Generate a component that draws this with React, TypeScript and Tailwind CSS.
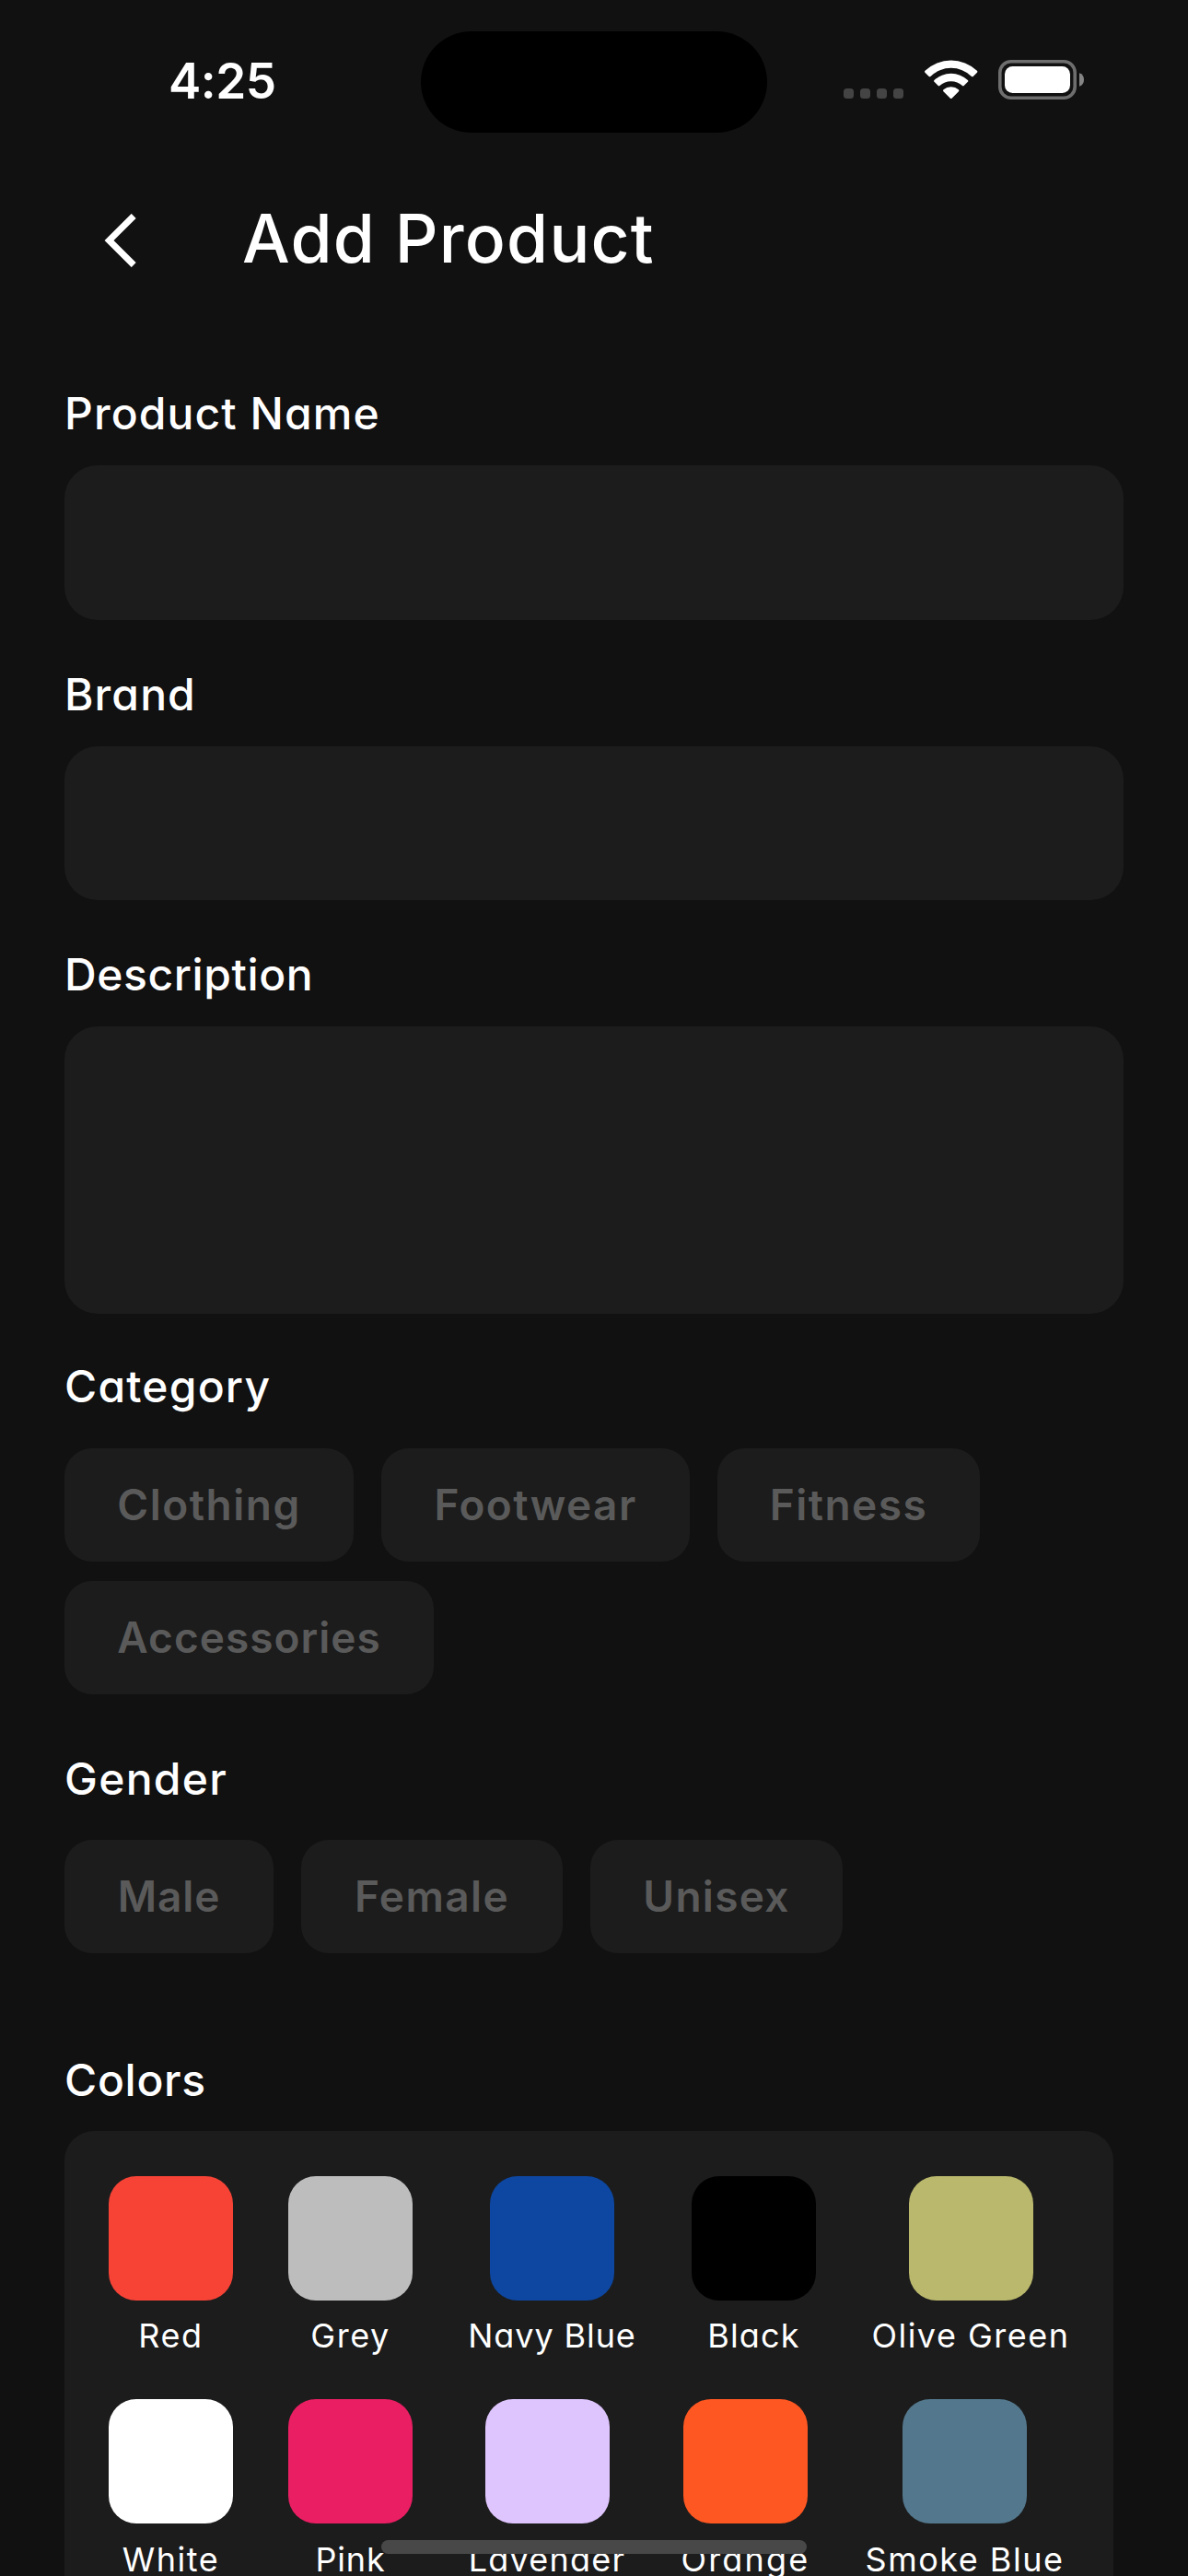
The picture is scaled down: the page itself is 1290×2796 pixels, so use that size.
import React from "react";

type Chip = { name: string; box: string };
type Swatch = { name: string; fill: string; box: string; tracking: string };

const categories: Chip[] = [
  { name: "Clothing", box: "w-[314px] tracking-[1.5px]" },
  { name: "Footwear", box: "w-[335px] tracking-[1.4px]" },
  { name: "Fitness", box: "w-[285px] tracking-[1.5px]" },
  { name: "Accessories", box: "w-[401px] tracking-[1px]" },
];

const genders: Chip[] = [
  { name: "Male", box: "w-[227px] tracking-[0.8px]" },
  { name: "Female", box: "w-[284px] tracking-[1.4px]" },
  { name: "Unisex", box: "w-[274px] tracking-[1.3px]" },
];

const swatchRows: Swatch[][] = [
  [
    { name: "Red", fill: "bg-[#f64336]", box: "w-[135px]", tracking: "tracking-[1.6px]" },
    { name: "Grey", fill: "bg-[#bdbdbd]", box: "w-[135px]", tracking: "tracking-[1.5px]" },
    { name: "Navy Blue", fill: "bg-[#0d47a1]", box: "w-[183px]", tracking: "tracking-[0.9px]" },
    { name: "Black", fill: "bg-black", box: "w-[135px]", tracking: "tracking-[1.2px]" },
    { name: "Olive Green", fill: "bg-[#bab86c]", box: "w-[216px]", tracking: "tracking-[1.5px]" },
  ],
  [
    { name: "White", fill: "bg-white", box: "w-[135px]", tracking: "tracking-[1.5px]" },
    { name: "Pink", fill: "bg-[#e91e63]", box: "w-[135px]", tracking: "tracking-[0.8px]" },
    { name: "Lavender", fill: "bg-[#dfc5fe]", box: "w-[172px]", tracking: "tracking-[1.2px]" },
    { name: "Orange", fill: "bg-[#ff5722]", box: "w-[139px]", tracking: "tracking-[2.2px]" },
    { name: "Smoke Blue", fill: "bg-[#53788d]", box: "w-[217px]", tracking: "tracking-[1.5px]" },
  ],
];

function StatusBar() {
  return (
    <header className="relative flex h-[178px] shrink-0 items-start">
      <span className="ml-[183px] mt-[58px] text-[53px] font-semibold leading-[60px] tracking-[-0.5px]">4:25</span>
      <div className="absolute left-[457px] top-[34px] h-[110px] w-[376px] rounded-full bg-black" />
      <div className="ml-auto mr-[113px] mt-[65px] flex h-[43px] items-start">
        <div className="mr-[23px] mt-[31px] flex gap-[7px]">
          {[0, 1, 2, 3].map((i) => (
            <i key={i} className="block size-[11px] rounded-[3.5px] bg-[#444444]" />
          ))}
        </div>
        <svg className="h-[43px] w-[58px]" viewBox="0 0 58 43" fill="#fff">
          <path d="M.5 11.8Q-.4 12.8.4 13.7L4.7 17.9Q5.5 18.7 6.4 17.9A32 32 0 0 1 51 17.9Q51.9 18.7 52.7 17.9L57 13.7Q57.8 12.8 56.9 11.8A41 41 0 0 0 .5 11.8Z" />
          <path d="M10.5 22Q9.6 23 10.5 23.8L14.7 28Q15.5 28.9 16.4 28A18 18 0 0 1 41 28Q41.9 28.9 42.7 28L46.9 23.8Q47.8 23 46.9 22A26.5 26.5 0 0 0 10.5 22Z" />
          <path d="M20.5 32.3Q19.5 33.3 20.4 34.2L27.9 41.7Q28.7 42.4 29.5 41.7L37 34.2Q37.9 33.3 36.9 32.3A12.5 12.5 0 0 0 20.5 32.3Z" />
        </svg>
        <svg className="ml-[22px] h-[43px] w-[93px]" viewBox="0 0 93 43">
          <rect x="1.8" y="1.8" width="81.4" height="39.4" rx="12" fill="none" stroke="#6e6e6e" strokeWidth="3.6" />
          <rect x="7" y="7" width="71" height="29" rx="8.5" fill="#fff" />
          <path d="M88 14.3Q93 16 93 21.5T88 28.8Z" fill="#858585" />
        </svg>
      </div>
    </header>
  );
}

function Label({ children, tracking }: { children: React.ReactNode; tracking: string }) {
  return (
    <h2 className={`h-[60px] whitespace-nowrap text-[48px] font-medium leading-[58px] ${tracking}`}>
      {children}
    </h2>
  );
}

function Chips({ items }: { items: Chip[] }) {
  return (
    <div className="flex flex-wrap gap-x-[30px] gap-y-[21px]">
      {items.map((c) => (
        <button
          key={c.name}
          className={`h-[123px] shrink-0 whitespace-nowrap rounded-[30px] bg-[#1c1c1c] text-center text-[46px] font-semibold leading-[123px] text-[#5a5a5a] [font-feature-settings:normal] ${c.box}`}
        >
          {c.name}
        </button>
      ))}
    </div>
  );
}

export default function App() {
  return (
    <div
      className={`relative flex h-[2796px] w-[1290px] flex-col overflow-hidden bg-[#111111] font-["Inter",sans-serif] text-white [font-feature-settings:'cv11']`}
    >
      <StatusBar />

      <div className="flex h-[242px] shrink-0 items-start">
        <svg className="ml-[112px] mt-[54px] h-[58px] w-[36px]" viewBox="0 0 36 58" fill="none" stroke="#fff" strokeWidth="7">
          <path d="M33.2 2.4L6.5 29L33.2 55.6" />
        </svg>
        <h1 className="ml-[115px] mt-[36px] whitespace-nowrap text-[73px] font-medium leading-[90px] tracking-[1.2px]">
          Add Product
        </h1>
      </div>

      <main className="flex flex-col px-[70px]">
        <Label tracking="tracking-[1.1px]">Product Name</Label>
        <div className="mb-[52px] mt-[25px] h-[167.5px] rounded-[36px] bg-[#1c1c1c]" />
        <Label tracking="tracking-[1.1px]">Brand</Label>
        <div className="mb-[52px] mt-[25px] h-[167.5px] rounded-[36px] bg-[#1c1c1c]" />
        <Label tracking="tracking-[0.6px]">Description</Label>
        <div className="mb-[50px] mt-[25px] h-[312px] rounded-[36px] bg-[#1c1c1c]" />

        <Label tracking="tracking-[1.2px]">Category</Label>
        <div className="mb-[63px] mt-[36px]">
          <Chips items={categories} />
        </div>
        <Label tracking="tracking-[1.3px]">Gender</Label>
        <div className="mb-[109px] mt-[35px]">
          <Chips items={genders} />
        </div>

        <Label tracking="tracking-[0.7px]">Colors</Label>
        <section className="mt-[24px] flex h-[560px] w-[1139px] shrink-0 flex-col gap-[44px] rounded-[32px] bg-[#1c1c1c] pl-[48px] pt-[48.5px]">
          {swatchRows.map((row, r) => (
            <div key={r} className="flex gap-[60px]">
              {row.map((s) => (
                <div key={s.name} className={`flex shrink-0 flex-col items-center ${s.box}`}>
                  <div className={`size-[135px] rounded-[30px] ${s.fill}`} />
                  <span className={`mt-[14.5px] whitespace-nowrap text-[36px] font-normal leading-[49px] ${s.tracking}`}>
                    {s.name}
                  </span>
                </div>
              ))}
            </div>
          ))}
        </section>
      </main>

      <div className="absolute left-[414px] top-[2757px] h-[15px] w-[462px] rounded-full bg-[#484848]" />
    </div>
  );
}
